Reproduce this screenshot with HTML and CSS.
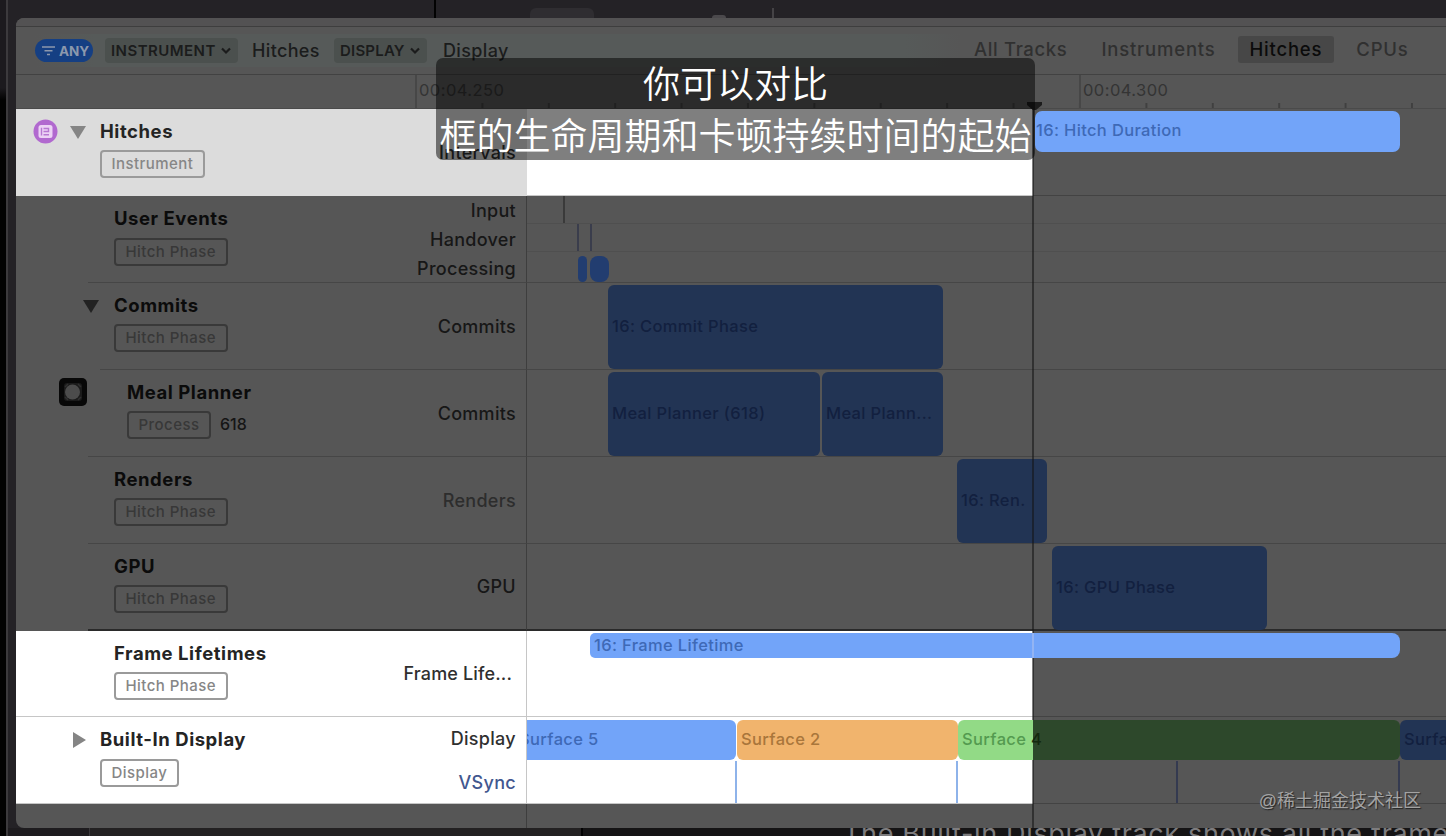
FILE: index.html
```
<!DOCTYPE html>
<html lang="zh-CN">
<head>
    <meta charset="UTF-8">
    <meta name="viewport" content="width=device-width, initial-scale=1.0">
    <title>Instruments - Hitches</title>
    <link rel="stylesheet" href="styles.css">
</head>
<body>
    <div class="desktop">
        <div class="desktop-top">
            <div class="desktop-pane"></div>
            <div class="desktop-tab"></div>
            <div class="desktop-knob"></div>
            <div class="desktop-line"></div>
        </div>
        <div class="desktop-left"></div>

        <div class="window">
            <div class="titlebar"></div>
            <div class="toolbar">
                <div class="filter">
                    <span class="any">
                        <svg width="13" height="10" viewBox="0 0 13 10"><path d="M0 1h13M2.5 4.7h8M5 8.4h3" stroke="currentColor" stroke-width="1.5"/></svg>
                        ANY
                    </span>
                    <span class="chip chip-instrument">INSTRUMENT
                        <svg width="10" height="8" viewBox="0 0 10 8"><path d="M1 1.5l4 4 4-4" fill="none" stroke="currentColor" stroke-width="2.2"/></svg>
                    </span>
                    <span class="token token-hitches">Hitches</span>
                    <span class="chip chip-display">DISPLAY
                        <svg width="10" height="8" viewBox="0 0 10 8"><path d="M1 1.5l4 4 4-4" fill="none" stroke="currentColor" stroke-width="2.2"/></svg>
                    </span>
                    <span class="token">Display</span>
                </div>
                <div class="scopes">
                    <span>All Tracks</span>
                    <span>Instruments</span>
                    <span class="active">Hitches</span>
                    <span>CPUs</span>
                </div>
            </div>

            <div class="ruler">
                <div class="mark">00:04.250</div>
                <div class="mark">00:04.300</div>
            </div>

            <div class="track hitches lit">
                <div class="gutter wide">
                    <svg class="hitch-icon" width="25" height="25" viewBox="0 0 25 25">
                        <circle cx="12.5" cy="12.5" r="12" fill="#b169cf"/>
                        <rect x="5.5" y="6" width="14" height="13" rx="2.5" fill="#ecd2f5"/>
                        <path d="M8.5 8.8v7.8M10.5 9.5h5v3h-5M10.5 15.8h5.5" fill="none" stroke="#b778d2" stroke-width="1.4"/>
                    </svg>
                    <svg class="arrow" width="16" height="13" viewBox="0 0 16 13"><path d="M0 0h16L8 13z"/></svg>
                </div>
                <div class="info">
                    <div class="name"><h3>Hitches</h3><span class="badge">Instrument</span></div>
                    <div class="lanes"><span>Intervals</span></div>
                </div>
                <div class="timeline">
                    <div class="bar bright hitch-bar" style="margin-left: 508px; width: 365px">16: Hitch Duration</div>
                </div>
            </div>

            <div class="track low">
                <div class="gutter"></div>
                <div class="info indent">
                    <div class="name"><h3>User Events</h3><span class="badge">Hitch Phase</span></div>
                    <div class="lanes triple"><span>Input</span><span>Handover</span><span>Processing</span></div>
                </div>
                <div class="timeline events">
                    <div class="lane"><i class="tick" style="margin-left: 36px"></i></div>
                    <div class="lane"><i class="tick blue" style="margin-left: 50px"></i><i class="tick blue" style="margin-left: 11px"></i></div>
                    <div class="lane"><i class="pill" style="margin-left: 51px; width: 9px"></i><i class="pill" style="margin-left: 3px; width: 19px"></i></div>
                </div>
            </div>

            <div class="track">
                <div class="gutter wide">
                    <svg class="arrow" width="16" height="13" viewBox="0 0 16 13"><path d="M0 0h16L8 13z"/></svg>
                </div>
                <div class="info nested">
                    <div class="name"><h3>Commits</h3><span class="badge">Hitch Phase</span></div>
                    <div class="lanes"><span>Commits</span></div>
                </div>
                <div class="timeline">
                    <div class="bar" style="margin-left: 81px; width: 335px">16: Commit Phase</div>
                </div>
            </div>

            <div class="track">
                <div class="gutter">
                    <svg class="app-icon" width="28" height="28" viewBox="0 0 28 28">
                        <rect width="28" height="28" rx="5" fill="#080808"/>
                        <rect x="5" y="5" width="18" height="18" rx="3" fill="#1b1b1b"/>
                        <circle cx="13.5" cy="14" r="7.5" fill="#4c4c4c"/>
                        <path d="M6 9l3-3M19 6l3 3M6 19l3 3M19 22l3-3" stroke="#303030" stroke-width="1.5"/>
                    </svg>
                </div>
                <div class="info deep">
                    <div class="name"><h3>Meal Planner</h3><span class="badge">Process</span><span class="pid">618</span></div>
                    <div class="lanes"><span>Commits</span></div>
                </div>
                <div class="timeline">
                    <div class="bar" style="margin-left: 81px; width: 212px">Meal Planner (618)</div>
                    <div class="bar" style="margin-left: 2px; width: 121px">Meal Plann...</div>
                </div>
            </div>

            <div class="track">
                <div class="gutter"></div>
                <div class="info indent">
                    <div class="name"><h3>Renders</h3><span class="badge">Hitch Phase</span></div>
                    <div class="lanes faded"><span>Renders</span></div>
                </div>
                <div class="timeline">
                    <div class="bar" style="margin-left: 430px; width: 90px">16: Ren.</div>
                </div>
            </div>

            <div class="track last">
                <div class="gutter"></div>
                <div class="info indent">
                    <div class="name"><h3>GPU</h3><span class="badge">Hitch Phase</span></div>
                    <div class="lanes"><span>GPU</span></div>
                </div>
                <div class="timeline">
                    <div class="bar" style="margin-left: 525px; width: 215px">16: GPU Phase</div>
                </div>
            </div>

            <div class="track lit lifetimes">
                <div class="gutter"></div>
                <div class="info indent">
                    <div class="name"><h3>Frame Lifetimes</h3><span class="badge">Hitch Phase</span></div>
                    <div class="lanes cut"><span>Frame Life...</span></div>
                </div>
                <div class="timeline">
                    <div class="bar bright life-bar" style="margin-left: 63px; width: 810px">16: Frame Lifetime</div>
                </div>
            </div>

            <div class="track lit low display">
                <div class="gutter wide">
                    <svg class="arrow" width="13" height="16" viewBox="0 0 13 16"><path d="M0 0v16l13-8z"/></svg>
                </div>
                <div class="info">
                    <div class="name"><h3>Built-In Display</h3><span class="badge">Display</span></div>
                    <div class="lanes double"><span>Display</span><span class="vsync-label">VSync</span></div>
                </div>
                <div class="timeline">
                    <div class="surfaces">
                        <div class="bar bright first">Surface 5</div>
                        <div class="bar orange">Surface 2</div>
                        <div class="bar green">Surface <b>4</b></div>
                        <div class="bar next">Surface 5</div>
                    </div>
                    <div class="vsync">
                        <i style="margin-left: 208px"></i>
                        <i style="margin-left: 219px"></i>
                        <i class="dim" style="margin-left: 218px"></i>
                        <i class="dim" style="margin-left: 220px"></i>
                    </div>
                </div>
            </div>
            <div class="footer"></div>
            <div class="playhead"><svg width="15" height="8" viewBox="0 0 15 8"><path d="M0 0h15v3l-6 5H6L0 3z" fill="#1c1c1c"/></svg></div>
        </div>

        <div class="desktop-bottom">
            <div class="pane-left"></div>
            <div class="pane-mid"></div>
            <div class="pane-text">The Built-in Display track shows all the frame</div>
        </div>
    </div>

    <div class="subtitle">
        <p>你可以对比</p>
        <p>框的生命周期和卡顿持续时间的起始</p>
    </div>
    <div class="watermark">@稀土掘金技术社区</div>
</body>
</html>
```
FILE: styles.css
```
* {
    margin: 0;
    padding: 0;
    box-sizing: border-box;
}

body {
    width: 1446px;
    height: 836px;
    overflow: hidden;
    background: #242226;
    font-family: Inter, "Noto Sans CJK SC", sans-serif;
    color: #151515;
}

.desktop {
    display: grid;
    grid-template: 18px 810px 8px / 16px 1430px;
    height: 836px;
}

.desktop-top {
    grid-column: 1 / 3;
    display: flex;
    align-items: flex-end;
    background: linear-gradient(90deg, #1c1a1e 6px, #3c3a3d 6px, #3c3a3d 8px, transparent 8px);
}

.desktop-pane {
    width: 436px;
    height: 18px;
    border-right: 2px solid #020202;
}

.desktop-tab {
    width: 64px;
    height: 10px;
    margin-left: 94px;
    border-radius: 6px 6px 0 0;
    background: #2f2d31;
}

.desktop-knob {
    width: 14px;
    height: 3px;
    margin-left: 118px;
    border-radius: 4px 4px 0 0;
    background: #4b494c;
}

.desktop-line {
    width: 2px;
    height: 10px;
    margin-left: 46px;
    background: #454346;
}

.desktop-left {
    background:
        linear-gradient(90deg, transparent 6px, #3c3a3d 6px, #3c3a3d 8px, #242226 8px),
        linear-gradient(#1c1a1e 70px, #020202 82px);
}

/* Instruments window */
.window {
    position: relative;
    overflow: hidden;
    border-radius: 8px 0 0 8px;
    background: #565656;
}

.titlebar {
    height: 9px;
    background: #535253;
    border-bottom: 1px solid #3e3e3e;
}

.toolbar {
    display: flex;
    align-items: center;
    height: 48px;
    padding-left: 19px;
    border-bottom: 1px solid #424242;
}

.filter {
    display: flex;
    flex: none;
    align-items: center;
    width: 926px;
    height: 33px;
    background: linear-gradient(90deg, transparent, #565a59 60px, #565a59 870px, transparent);
}

.any {
    display: flex;
    align-items: center;
    gap: 4px;
    width: 58px;
    height: 23px;
    padding-left: 7px;
    border-radius: 12px;
    background: #153f83;
    color: #8c98ad;
    font-size: 13.5px;
    font-weight: 700;
}

.chip {
    display: flex;
    align-items: center;
    gap: 5px;
    height: 25px;
    padding: 0 6px;
    border-radius: 4px;
    background: #4b504e;
    color: #1b1c1c;
    font-size: 15px;
    font-weight: 600;
}

.chip svg {
    flex: none;
}

.chip-instrument {
    width: 133px;
    margin-left: 12px;
    letter-spacing: 0.45px;
}

.chip-display {
    width: 93px;
    margin-right: 16px;
    letter-spacing: 0.2px;
}

.token {
    font-size: 18px;
    font-weight: 500;
    color: #1b1c1c;
    letter-spacing: 0.35px;
}

.token-hitches {
    width: 82px;
    margin-left: 14px;
}

.scopes {
    display: flex;
    flex: none;
    align-items: center;
    padding-bottom: 3px;
    color: #303030;
    font-size: 18.5px;
    font-weight: 500;
    letter-spacing: 0.8px;
}

.scopes span {
    padding: 3px 12px;
    margin-right: 10px;
    line-height: 21px;
}

.scopes span:first-child {
    padding-left: 13px;
    letter-spacing: 0.65px;
}

.scopes .active {
    background: #474747;
    color: #0b0b0b;
    border-radius: 3px;
}

.ruler {
    display: flex;
    height: 34px;
    padding-left: 399px;
    border-bottom: 1px solid #4a4a4a;
}

.mark {
    flex: none;
    width: 664px;
    padding-left: 2px;
    border-left: 2px solid #474747;
    background: linear-gradient(90deg, transparent 64.5px, #404040 64.5px) left bottom / 66.4px 5px repeat-x;
    font-size: 16.5px;
    line-height: 30px;
    color: #343434;
    letter-spacing: 0.45px;
}

/* tracks */
.track {
    display: flex;
    height: 87px;
}

.gutter {
    display: flex;
    flex: none;
    width: 72px;
    justify-content: flex-end;
    align-items: flex-start;
    padding-top: 8px;
}

.gutter.wide {
    width: 84px;
    padding-right: 1px;
}

.hitch-icon {
    margin: 2px 12px 0 0;
}

.app-icon {
    margin-right: 1px;
}

.arrow {
    margin-top: 9px;
    fill: #222;
}

.lit .arrow {
    fill: #858585;
}

.hitches .arrow {
    margin-right: 13px;
}

.display .arrow {
    margin: 7px 13px 0 0;
}

.info {
    display: flex;
    flex: 1;
    justify-content: space-between;
    padding: 11px 10px 0 0;
    border-bottom: 1px solid #464646;
    border-right: 1px solid #3e3e3e;
}

.low .info {
    padding-top: 12px;
}

.indent {
    padding-left: 26px;
}

.nested {
    padding-left: 14px;
}

.deep {
    padding-left: 39px;
}

.name {
    white-space: nowrap;
}

.name h3 {
    margin-bottom: 8px;
    font-size: 18.5px;
    font-weight: 700;
    line-height: 22px;
    letter-spacing: 0.55px;
    color: #0b0b0b;
}

.low .name h3 {
    margin-top: -1px;
    margin-bottom: 9px;
}

.badge {
    display: inline-block;
    height: 28px;
    padding: 0 9.5px;
    border: 2px solid #393939;
    border-radius: 4px;
    font-size: 15px;
    font-weight: 500;
    line-height: 24px;
    letter-spacing: 0.45px;
    color: #383838;
}

.pid {
    margin-left: 9px;
    font-size: 16px;
    font-weight: 500;
}

.lanes {
    display: flex;
    flex-direction: column;
    justify-content: center;
    margin-top: -11px;
    text-align: right;
    font-size: 18px;
    font-weight: 500;
    line-height: 29px;
    letter-spacing: 0.3px;
    color: #171717;
}

.low .lanes {
    margin-top: -12px;
}

.faded {
    color: #2d2d2d;
}

.cut {
    padding-right: 4px;
    letter-spacing: 0.15px;
}

.lanes.double {
    margin-top: -10px;
    line-height: 44px;
}

.vsync-label {
    color: #42578f;
}

.timeline {
    display: flex;
    flex: none;
    width: 919px;
    border-bottom: 1px solid #464646;
}

.last .info,
.last .timeline {
    border-bottom: 2px solid #2a2a2a;
}

.bar {
    flex: none;
    height: 84px;
    margin-top: 2px;
    padding-left: 4px;
    border-radius: 6px;
    background: #223454;
    color: #12203f;
    font-size: 16.5px;
    font-weight: 500;
    line-height: 83px;
    letter-spacing: 0.35px;
    white-space: nowrap;
    overflow: hidden;
}

.bright {
    background: #72a4f9;
    color: #3e69b6;
}

.events {
    flex-direction: column;
}

.lane {
    display: flex;
    height: 28px;
    border-bottom: 1px solid #4f4f4f;
}

.lane:last-child {
    height: 30px;
    padding-top: 4px;
    border-bottom: none;
}

.tick {
    width: 2px;
    background: #3a3a3a;
}

.tick.blue {
    background: #3a3d4c;
}

.pill {
    height: 26px;
    border-radius: 8px;
    background: #223d70;
}

/* highlighted tracks, lit up to the playhead */
.lit {
    background: #fff;
}

.lit .info {
    border-color: #c6c6c6;
}

.lit h3 {
    color: #242424;
}

.lit .lanes {
    color: #2f2f2f;
}

.lit .lanes .vsync-label {
    color: #42578f;
}

.lit .badge {
    border-color: #9a9a9a;
    color: #868686;
}

.lit .timeline {
    background: linear-gradient(90deg, #fff 506px, #565656 506px);
    border-bottom-color: rgba(0, 0, 0, 0.22);
}

.hitches .gutter,
.hitches .info {
    background: #dcdcdc;
    border-color: #dcdcdc;
}

.hitch-bar {
    height: 41px;
    line-height: 39px;
    padding-left: 1px;
    border-radius: 7px;
}

.lifetimes {
    height: 86px;
}

.lifetimes .gutter,
.display .gutter {
    border-bottom: 1px solid #c6c6c6;
}

.life-bar {
    height: 25px;
    line-height: 25px;
    border-radius: 5px 8px 8px 5px;
    background: linear-gradient(90deg, #72a4f9 442px, #93b4f3 442px, #93b4f3 444px, #72a4f9 444px);
}

.display .timeline {
    flex-direction: column;
}

.surfaces {
    display: flex;
    height: 44px;
    overflow: hidden;
}

.surfaces .bar {
    height: 40px;
    margin-top: 3px;
    line-height: 39px;
}

.surfaces .first {
    width: 209px;
    margin-right: 1px;
    padding-left: 0;
    border-radius: 0 6px 6px 0;
    text-indent: -8px;
}

.surfaces .orange {
    width: 221px;
    background: #f1b46d;
    color: #a9763b;
}

.surfaces .green {
    width: 442px;
    background: linear-gradient(90deg, #92da86 75px, #2d482b 75px);
    color: #549a50;
}

.green b {
    font-weight: 500;
    color: #14280f;
}

.surfaces .next {
    width: 60px;
}

.vsync {
    display: flex;
    flex: 1;
}

.vsync i {
    width: 2px;
    background: #8eb3ea;
}

.vsync .dim {
    background: #343a50;
}

.footer {
    width: 511px;
    height: 24px;
    border-right: 1px solid #3e3e3e;
}

.playhead {
    position: absolute;
    top: 84px;
    left: 1016px;
    width: 2px;
    height: 726px;
    background: rgba(20, 20, 20, 0.55);
}

.playhead svg {
    position: absolute;
    top: 0;
    left: -5px;
}

.lit .bar {
    position: relative;
    z-index: 1;
}

.desktop-bottom {
    grid-column: 1 / 3;
    display: flex;
    background: linear-gradient(90deg, #020202 6px, #3c3a3d 6px, #3c3a3d 8px, #1e1c1f 8px);
}

.pane-left {
    width: 90px;
    border-right: 1px solid #3b393c;
}

.pane-mid {
    width: 493px;
    border-right: 2px solid #020202;
    background: #232122;
}

.pane-text {
    flex: 1;
    height: 8px;
    padding-left: 260px;
    overflow: hidden;
    background: #151415;
    color: #7d7c7e;
    font-size: 27px;
    line-height: 11px;
    letter-spacing: 0.65px;
    white-space: nowrap;
}

.subtitle {
    position: absolute;
    z-index: 2;
    top: 58px;
    left: 436px;
    width: 599px;
    height: 102px;
    border-radius: 7px;
    background: rgba(0, 0, 0, 0.5);
    color: #fff;
    font-family: "Noto Sans CJK SC", sans-serif;
    font-size: 37px;
    font-weight: 350;
    line-height: 52px;
    text-align: center;
    white-space: nowrap;
}

.subtitle p:first-child {
    margin-top: -2px;
}

.watermark {
    position: absolute;
    top: 788px;
    right: 25px;
    color: #a3a3a3;
    font-family: "Liberation Sans", "Noto Sans CJK SC", sans-serif;
    font-size: 18px;
    line-height: 26px;
    text-shadow: 1px 1px 1px #222;
}
```
